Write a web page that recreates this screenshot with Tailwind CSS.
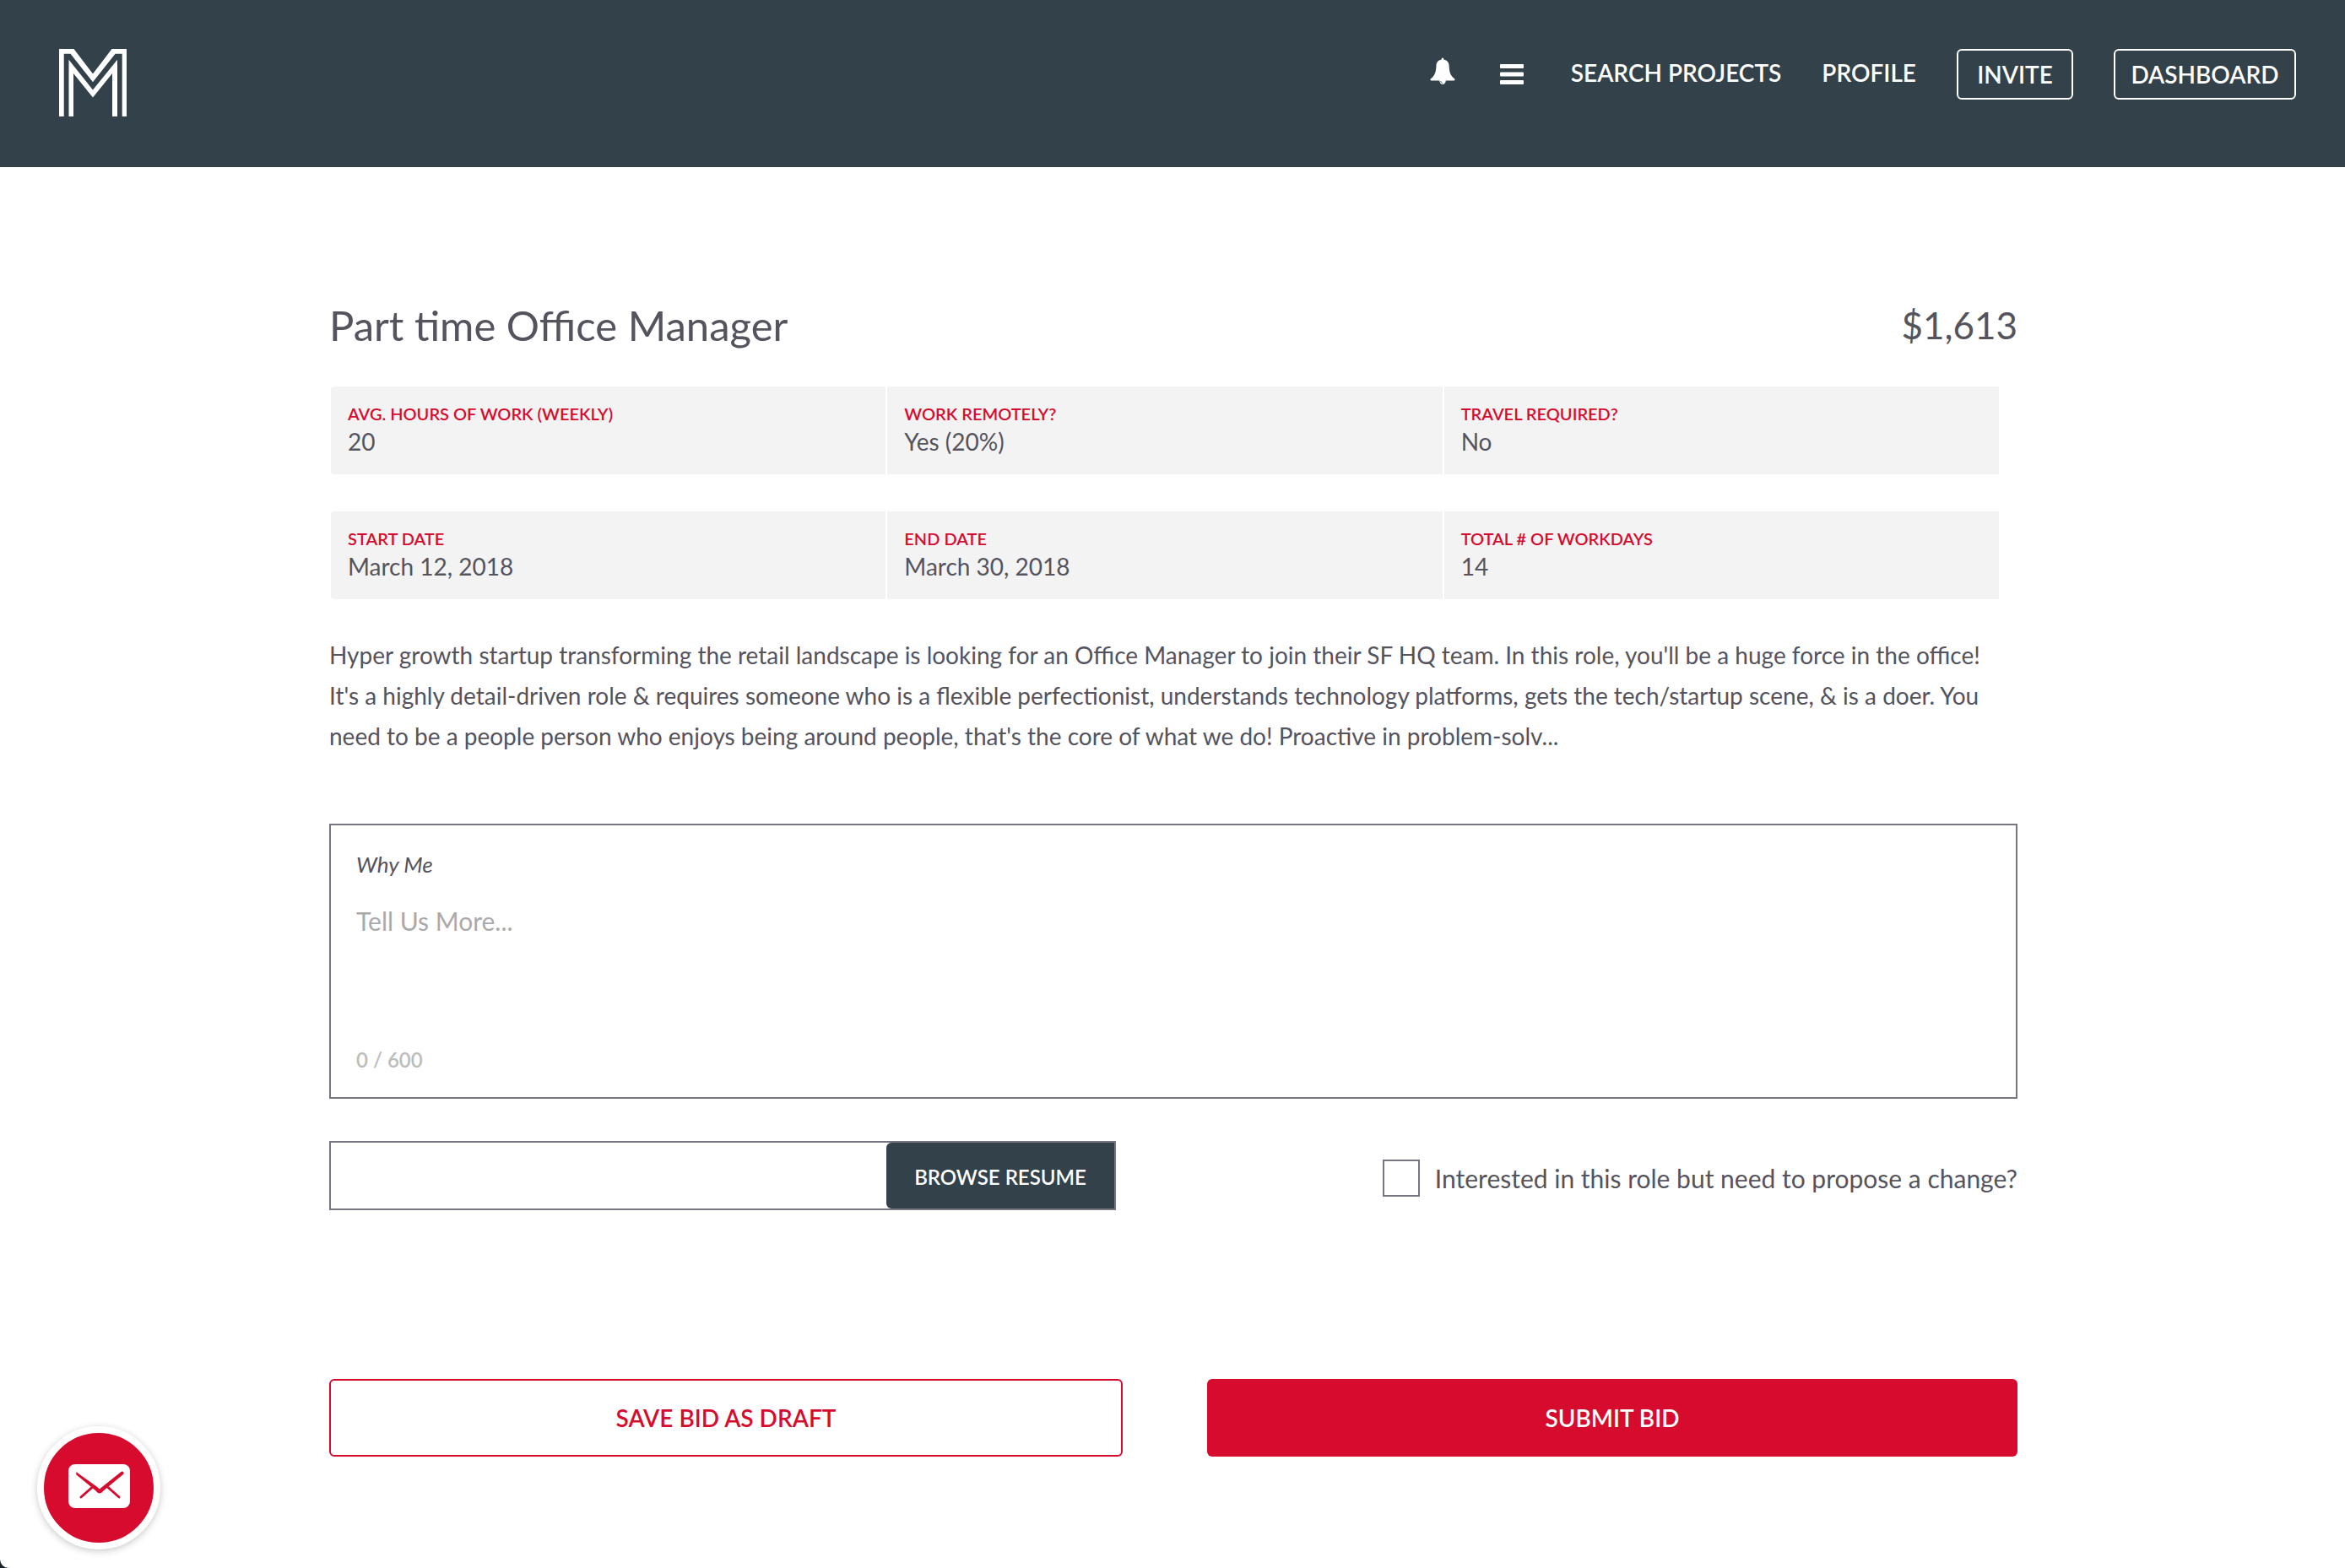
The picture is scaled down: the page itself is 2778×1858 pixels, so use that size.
<!DOCTYPE html>
<html lang="en">
<head>
<meta charset="utf-8">
<meta name="viewport" content="width=device-width, initial-scale=1">
<title>Part time Office Manager</title>
<script src="https://cdn.jsdelivr.net/npm/@tailwindcss/browser@4"></script>
</head>
<body class="min-h-screen bg-white font-['Lato',sans-serif] text-[#54535e]">

<header class="flex items-start justify-between bg-[#33414a] pt-[58px] pr-[58px] pb-[60px] pl-[70px] text-white">
  <a href="#" aria-label="Home">
    <svg class="size-20" viewBox="0 0 80 80" fill="currentColor" aria-hidden="true">
      <path d="M0 0H17.500L40 29.500 62.500 0H80V80H74.700V5.700H66.500L40 39.300 13.500 5.700H5.700V80H0Z"/>
      <path d="M11.500 80V12.800L40 48.500 69 12.800V80H63V29L40 57.500 17 29V80Z"/>
    </svg>
  </a>
  <nav class="flex items-center gap-12 text-[28px] leading-9 font-semibold">
    <a href="#" class="pb-2" aria-label="Notifications">
      <svg class="h-8 w-9" viewBox="0 0 36 32" fill="currentColor" aria-hidden="true">
        <path d="M16 0.400C15.100 .8 14.600 1.600 14.600 2.500 10.500 3.400 8.700 6 8.500 9.600 8.200 16 7.500 19.500 4.500 23L1.800 25.500C1 26.600 1.500 27.400 2.700 27.400H12.200C12.500 30 14 32 16 32S19.600 30 19.900 27.400H29.300C30.500 27.400 31 26.600 30.200 25.500L27.500 23C24.500 19.500 24 16 23.600 9.600 23.400 6 21.500 3.400 17.400 2.500 17.400 1.600 16.900 .8 16 .4Z"/>
        <path d="M13.800 28C13.900 29.500 14.800 30.600 16.200 30.800" fill="none" stroke="#33414a" stroke-width=".8"/>
      </svg>
    </a>
    <a href="#" aria-label="Menu">
      <svg class="h-6 w-9" viewBox="0 0 36 24" fill="currentColor" aria-hidden="true">
        <rect width="28" height="5" rx="1"/><rect y="9.500" width="28" height="5" rx="1"/><rect y="19" width="28" height="5" rx="1"/>
      </svg>
    </a>
    <a href="#" class="pb-1">SEARCH PROJECTS</a>
    <a href="#" class="pb-1">PROFILE</a>
    <a href="#" class="flex h-[60px] w-[138px] items-center justify-center rounded-md border-2 border-white">INVITE</a>
    <a href="#" class="flex h-[60px] w-[216px] items-center justify-center rounded-md border-2 border-white">DASHBOARD</a>
  </nav>
</header>

<main class="pt-[157px] pr-[388px] pb-20 pl-[390px]">
  <div class="flex items-center justify-between leading-[60px]">
    <h1 class="text-[49px]">Part time Office Manager</h1>
    <p class="text-[44px]">$1,613</p>
  </div>

  <dl class="mt-[43px] mr-[22px] ml-[2px] grid grid-cols-3 gap-x-[2px] gap-y-11">
    <div class="rounded-l bg-[#f3f3f3] px-5 pt-5 pb-[18px]">
      <dt class="text-xl leading-6 font-semibold text-[#d60b2e]">AVG. HOURS OF WORK (WEEKLY)</dt>
      <dd class="text-[28px] leading-[42px]">20</dd>
    </div>
    <div class="bg-[#f3f3f3] px-5 pt-5 pb-[18px]">
      <dt class="text-xl leading-6 font-semibold text-[#d60b2e]">WORK REMOTELY?</dt>
      <dd class="text-[28px] leading-[42px]">Yes (20%)</dd>
    </div>
    <div class="bg-[#f3f3f3] px-5 pt-5 pb-[18px]">
      <dt class="text-xl leading-6 font-semibold text-[#d60b2e]">TRAVEL REQUIRED?</dt>
      <dd class="text-[28px] leading-[42px]">No</dd>
    </div>
    <div class="rounded-l bg-[#f3f3f3] px-5 pt-5 pb-[18px]">
      <dt class="text-xl leading-6 font-semibold text-[#d60b2e]">START DATE</dt>
      <dd class="text-[28px] leading-[42px]">March 12, 2018</dd>
    </div>
    <div class="bg-[#f3f3f3] px-5 pt-5 pb-[18px]">
      <dt class="text-xl leading-6 font-semibold text-[#d60b2e]">END DATE</dt>
      <dd class="text-[28px] leading-[42px]">March 30, 2018</dd>
    </div>
    <div class="bg-[#f3f3f3] px-5 pt-5 pb-[18px]">
      <dt class="text-xl leading-6 font-semibold text-[#d60b2e]">TOTAL # OF WORKDAYS</dt>
      <dd class="text-[28px] leading-[42px]">14</dd>
    </div>
  </dl>

  <p class="mt-[42px] pr-5 text-[28px] leading-[48px]">Hyper growth startup transforming the retail landscape is looking for an Office Manager to join their SF HQ team. In this role, you'll be a huge force in the office! It's a highly detail-driven role &amp; requires someone who is a flexible perfectionist, understands technology platforms, gets the tech/startup scene, &amp; is a doer. You need to be a people person who enjoys being around people, that's the core of what we do! Proactive in problem-solv...</p>

  <form onsubmit="return false">
    <div class="mt-20 flex flex-col border-2 border-[#777680] px-[30px] pt-[30px] pb-7">
      <label for="why" class="text-[26px] leading-8 italic">Why Me</label>
      <textarea id="why" maxlength="600" placeholder="Tell Us More..." class="mt-[31px] h-[169px] resize-none text-[30px] leading-10 outline-none placeholder:text-[#aaaaab]"></textarea>
      <p class="text-2xl leading-8 font-semibold text-[#bcbcbc]">0 / 600</p>
    </div>

    <div class="mt-[50px] flex items-center justify-between">
      <div class="flex h-[82px] w-[932px] border-2 border-[#777680]">
        <input type="text" readonly aria-label="Resume file" class="min-w-0 flex-1 px-4 text-[28px] outline-none">
        <button type="button" class="w-[270px] rounded-l-md bg-[#33414a] pt-1 text-2xl font-semibold text-white">BROWSE RESUME</button>
      </div>
      <label class="flex items-center gap-[18px] pt-1.5 text-[30px] leading-10">
        <input type="checkbox" class="size-11 appearance-none border-2 border-[#777680] checked:bg-[#33414a]">
        Interested in this role but need to propose a change?
      </label>
    </div>

    <div class="mt-[200px] flex justify-between text-[28px] font-semibold">
      <button type="button" class="h-[92px] w-[47%] rounded-md border-2 border-[#d60b2e] text-[#d60b2e]">SAVE BID AS DRAFT</button>
      <button type="submit" class="h-[92px] w-[48%] rounded-md bg-[#d60b2e] text-white">SUBMIT BID</button>
    </div>
  </form>
</main>

<!-- Chat launcher -->
<button type="button" aria-label="Send us a message" class="fixed bottom-[22px] left-[44px] flex size-[146px] items-center justify-center rounded-full border-8 border-white bg-[#d60b2e] shadow-[0_2px_8px_rgba(0,0,0,0.22)]">
  <svg class="h-[56px] w-[73px]" viewBox="0 0 73 56" aria-hidden="true">
    <rect width="73" height="52" rx="8" fill="#fff"/>
    <path d="M9 9 33.500 26.500 37 29.500 40.500 26.500 62.500 9A1.600 1.600 0 0 1 65 12L41.500 31.500C38.500 35.500 35.500 35.500 32.500 31.500L9.500 12.500A1.900 1.900 0 0 1 11 9.400Z" fill="#d60b2e"/>
    <path d="M28 27.500 15 39M47 27.500 60 39" fill="none" stroke="#d60b2e" stroke-width="3" stroke-linecap="round"/>
  </svg>
</button>

<!-- Rounded window corner -->
<svg class="fixed bottom-0 left-0 size-[10px]" viewBox="0 0 10 10" aria-hidden="true"><path d="M0 0Q1 9 10 10H0Z" fill="#1a2227"/></svg>

</body>
</html>
